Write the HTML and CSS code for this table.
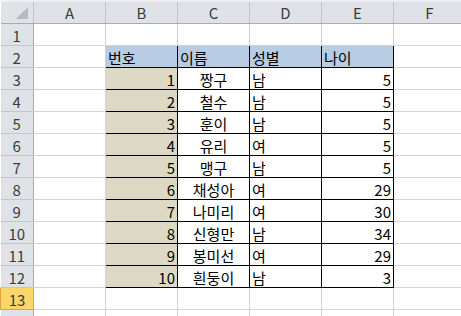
FILE: index.html
```html
<!DOCTYPE html>
<html lang="ko">
<head>
  <meta charset="UTF-8">
  <title>Sheet1</title>
  <link rel="stylesheet" href="styles.css">
</head>
<body>
  <table class="sheet">
    <colgroup>
      <col class="col-head">
      <col class="col"><col class="col"><col class="col">
      <col class="col"><col class="col"><col class="col">
    </colgroup>
    <thead>
      <tr>
        <th class="corner"><span class="corner-tri"></span></th>
        <th>A</th><th>B</th><th>C</th><th>D</th><th>E</th><th>F</th>
      </tr>
    </thead>
    <tbody>
      <tr><th>1</th><td></td><td></td><td></td><td></td><td></td><td></td></tr>
      <tr>
        <th>2</th><td></td>
        <td class="box title">번호</td><td class="box title">이름</td>
        <td class="box title">성별</td><td class="box title">나이</td><td></td>
      </tr>
      <tr><th>3</th><td></td><td class="box no">1</td><td class="box name">짱구</td><td class="box">남</td><td class="box num">5</td><td></td></tr>
      <tr><th>4</th><td></td><td class="box no">2</td><td class="box name">철수</td><td class="box">남</td><td class="box num">5</td><td></td></tr>
      <tr><th>5</th><td></td><td class="box no">3</td><td class="box name">훈이</td><td class="box">남</td><td class="box num">5</td><td></td></tr>
      <tr><th>6</th><td></td><td class="box no">4</td><td class="box name">유리</td><td class="box">여</td><td class="box num">5</td><td></td></tr>
      <tr><th>7</th><td></td><td class="box no">5</td><td class="box name">맹구</td><td class="box">남</td><td class="box num">5</td><td></td></tr>
      <tr><th>8</th><td></td><td class="box no">6</td><td class="box name">채성아</td><td class="box">여</td><td class="box num">29</td><td></td></tr>
      <tr><th>9</th><td></td><td class="box no">7</td><td class="box name">나미리</td><td class="box">여</td><td class="box num">30</td><td></td></tr>
      <tr><th>10</th><td></td><td class="box no">8</td><td class="box name">신형만</td><td class="box">남</td><td class="box num">34</td><td></td></tr>
      <tr><th>11</th><td></td><td class="box no">9</td><td class="box name">봉미선</td><td class="box">여</td><td class="box num">29</td><td></td></tr>
      <tr><th>12</th><td></td><td class="box no">10</td><td class="box name">흰둥이</td><td class="box">남</td><td class="box num">3</td><td></td></tr>
      <tr><th class="active">13</th><td></td><td></td><td></td><td></td><td></td><td></td></tr>
      <tr><th></th><td></td><td></td><td></td><td></td><td></td><td></td></tr>
    </tbody>
  </table>
</body>
</html>
```

FILE: styles.css
```css
body {
  margin: 0;
  background: #FFFFFF;
  overflow: hidden;
  font-family: "Noto Sans CJK KR", "Noto Sans", sans-serif;
}

.sheet {
  border-collapse: collapse;
  table-layout: fixed;
  width: 465px;
}

.col-head {
  width: 33px;
}

.col {
  width: 72px;
}

.sheet th,
.sheet td {
  padding: 0 2px;
  border-right: 1px solid #D4D4D4;
  border-bottom: 1px solid #D4D4D4;
  font-size: 15px;
  line-height: 18px;
  white-space: nowrap;
  overflow: hidden;
}

/* column letters and row numbers */
.sheet th {
  background: #DFE3E8;
  color: #3C3C3C;
  font-weight: normal;
  text-align: center;
  border-right: 1px solid #ABABAB;
  border-bottom: 1px solid #ABABAB;
}

.sheet thead th {
  height: 21px;
  border-top: 2px solid #EEF0F3;
  border-right: 1px solid #BCC2CA;
  border-bottom: 1px solid #ABABAB;
  vertical-align: middle;
}

.sheet tbody tr {
  height: 22px;
}

.sheet tbody th {
  border-bottom: 1px solid #C2C7CE;
  border-right: 1px solid #ABABAB;
  vertical-align: bottom;
}

.sheet td {
  vertical-align: bottom;
  color: #000000;
}

.corner {
  position: relative;
}

.corner-tri {
  position: absolute;
  right: 5px;
  bottom: 4px;
  width: 0;
  height: 0;
  border-left: 12px solid transparent;
  border-bottom: 12px solid #B5BBC2;
}

.sheet th.active {
  background: #FDD66A;
  color: #3C3C3C;
  border: 1px solid #E1A43C;
}

/* the member table */
.sheet td.box {
  border: 1px solid #000000;
}

.sheet td.title {
  background: #B8CCE4;
  text-align: left;
}

.sheet td.no {
  background: #DDD9C4;
  text-align: right;
}

.sheet td.name {
  text-align: center;
}

.sheet td.num {
  text-align: right;
}
```
